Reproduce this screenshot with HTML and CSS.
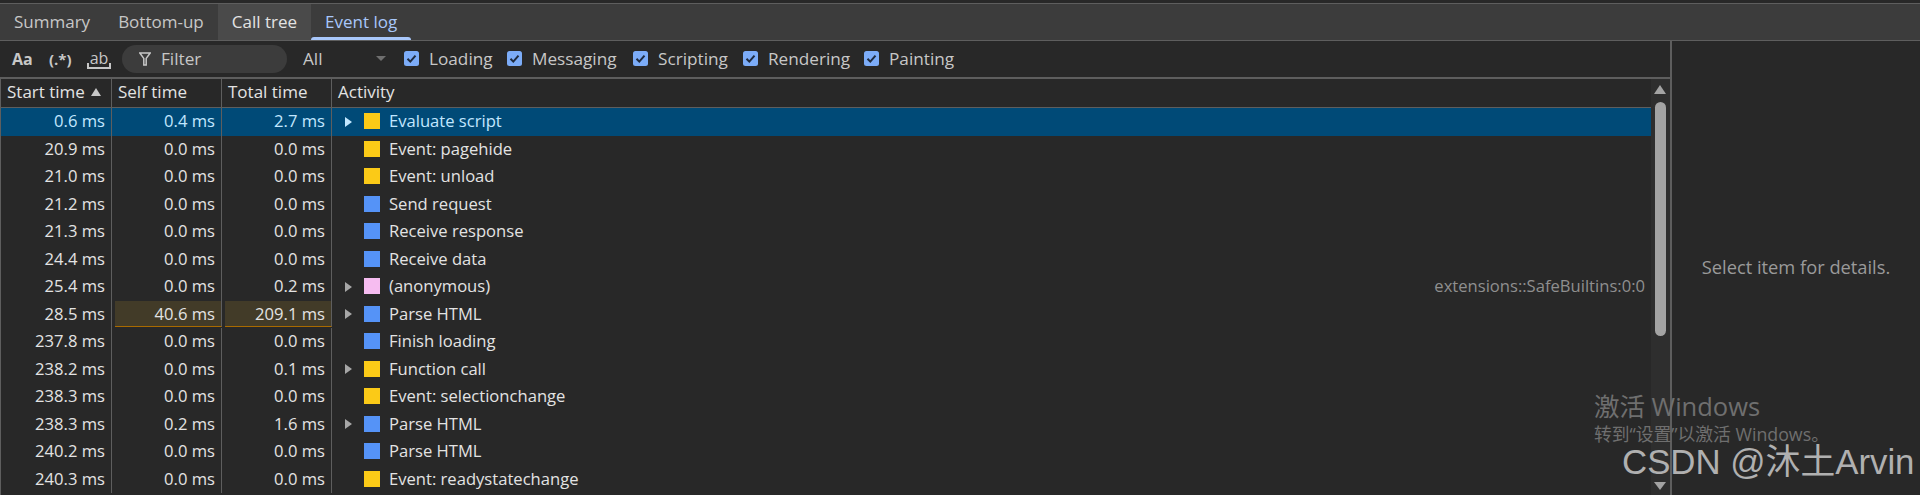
FILE: index.html
```html
<!DOCTYPE html>
<html lang="en">
<head>
<meta charset="utf-8">
<title>Event log</title>
<link rel="stylesheet" href="styles.css">
</head>
<body>
<div class="app">
  <nav class="tabs">
    <span class="tab">Summary</span>
    <span class="tab">Bottom-up</span>
    <span class="tab hover">Call tree</span>
    <span class="tab active">Event log</span>
  </nav>
  <div class="main">
    <section class="left">
      <div class="toolbar">
        <span class="tool t-aa">Aa</span>
        <span class="tool t-re">(.*)</span>
        <span class="tool t-ab">ab</span>
        <div class="filter">
          <svg class="funnel" width="12" height="14" viewBox="0 0 12 14"><path d="M0.8 1h10.4L7.2 6.4V13H4.8V6.4z" fill="none" stroke="#c7c7c7" stroke-width="1.5"/></svg>
          <span>Filter</span>
        </div>
        <div class="select"><span>All</span><i class="caret"></i></div>
        <label class="check c1"><svg class="box" width="15" height="15" viewBox="0 0 15 15"><rect width="15" height="15" rx="2.5" fill="#7cacf8"/><path d="M3.5 7.8l2.8 2.8L11.5 4.6" fill="none" stroke="#1f2b3f" stroke-width="2"/></svg>Loading</label>
        <label class="check c2"><svg class="box" width="15" height="15" viewBox="0 0 15 15"><rect width="15" height="15" rx="2.5" fill="#7cacf8"/><path d="M3.5 7.8l2.8 2.8L11.5 4.6" fill="none" stroke="#1f2b3f" stroke-width="2"/></svg>Messaging</label>
        <label class="check c3"><svg class="box" width="15" height="15" viewBox="0 0 15 15"><rect width="15" height="15" rx="2.5" fill="#7cacf8"/><path d="M3.5 7.8l2.8 2.8L11.5 4.6" fill="none" stroke="#1f2b3f" stroke-width="2"/></svg>Scripting</label>
        <label class="check c4"><svg class="box" width="15" height="15" viewBox="0 0 15 15"><rect width="15" height="15" rx="2.5" fill="#7cacf8"/><path d="M3.5 7.8l2.8 2.8L11.5 4.6" fill="none" stroke="#1f2b3f" stroke-width="2"/></svg>Rendering</label>
        <label class="check c5"><svg class="box" width="15" height="15" viewBox="0 0 15 15"><rect width="15" height="15" rx="2.5" fill="#7cacf8"/><path d="M3.5 7.8l2.8 2.8L11.5 4.6" fill="none" stroke="#1f2b3f" stroke-width="2"/></svg>Painting</label>
      </div>
      <div class="grid-wrap">
        <div class="grid">
          <div class="row head">
            <div class="cell">Start time<i class="sort"></i></div>
            <div class="cell">Self time</div>
            <div class="cell">Total time</div>
            <div class="cell activity">Activity</div>
          </div>
          <div class="row selected"><div class="cell num">0.6 ms</div><div class="cell num">0.4 ms</div><div class="cell num">2.7 ms</div><div class="cell activity"><i class="arrow"></i><i class="sq yellow"></i>Evaluate script</div></div>
          <div class="row"><div class="cell num">20.9 ms</div><div class="cell num">0.0 ms</div><div class="cell num">0.0 ms</div><div class="cell activity"><i class="noarrow"></i><i class="sq yellow"></i>Event: pagehide</div></div>
          <div class="row"><div class="cell num">21.0 ms</div><div class="cell num">0.0 ms</div><div class="cell num">0.0 ms</div><div class="cell activity"><i class="noarrow"></i><i class="sq yellow"></i>Event: unload</div></div>
          <div class="row"><div class="cell num">21.2 ms</div><div class="cell num">0.0 ms</div><div class="cell num">0.0 ms</div><div class="cell activity"><i class="noarrow"></i><i class="sq blue"></i>Send request</div></div>
          <div class="row"><div class="cell num">21.3 ms</div><div class="cell num">0.0 ms</div><div class="cell num">0.0 ms</div><div class="cell activity"><i class="noarrow"></i><i class="sq blue"></i>Receive response</div></div>
          <div class="row"><div class="cell num">24.4 ms</div><div class="cell num">0.0 ms</div><div class="cell num">0.0 ms</div><div class="cell activity"><i class="noarrow"></i><i class="sq blue"></i>Receive data</div></div>
          <div class="row"><div class="cell num">25.4 ms</div><div class="cell num">0.0 ms</div><div class="cell num">0.2 ms</div><div class="cell activity"><i class="arrow"></i><i class="sq pink"></i>(anonymous)<span class="source">extensions::SafeBuiltins:0:0</span></div></div>
          <div class="row"><div class="cell num">28.5 ms</div><div class="cell num warn">40.6 ms</div><div class="cell num warn">209.1 ms</div><div class="cell activity"><i class="arrow"></i><i class="sq blue"></i>Parse HTML</div></div>
          <div class="row"><div class="cell num">237.8 ms</div><div class="cell num">0.0 ms</div><div class="cell num">0.0 ms</div><div class="cell activity"><i class="noarrow"></i><i class="sq blue"></i>Finish loading</div></div>
          <div class="row"><div class="cell num">238.2 ms</div><div class="cell num">0.0 ms</div><div class="cell num">0.1 ms</div><div class="cell activity"><i class="arrow"></i><i class="sq yellow"></i>Function call</div></div>
          <div class="row"><div class="cell num">238.3 ms</div><div class="cell num">0.0 ms</div><div class="cell num">0.0 ms</div><div class="cell activity"><i class="noarrow"></i><i class="sq yellow"></i>Event: selectionchange</div></div>
          <div class="row"><div class="cell num">238.3 ms</div><div class="cell num">0.2 ms</div><div class="cell num">1.6 ms</div><div class="cell activity"><i class="arrow"></i><i class="sq blue"></i>Parse HTML</div></div>
          <div class="row"><div class="cell num">240.2 ms</div><div class="cell num">0.0 ms</div><div class="cell num">0.0 ms</div><div class="cell activity"><i class="noarrow"></i><i class="sq blue"></i>Parse HTML</div></div>
          <div class="row"><div class="cell num">240.3 ms</div><div class="cell num">0.0 ms</div><div class="cell num">0.0 ms</div><div class="cell activity"><i class="noarrow"></i><i class="sq yellow"></i>Event: readystatechange</div></div>
        </div>
        <div class="scrollbar">
          <i class="sb-up"></i>
          <i class="sb-thumb"></i>
          <i class="sb-down"></i>
        </div>
      </div>
    </section>
    <aside class="details">Select item for details.</aside>
  </div>
  <div class="activate">
    <div class="a1">激活 Windows</div>
    <div class="a2">转到“设置”以激活 Windows。</div>
  </div>
  <div class="csdn">CSDN @沐土Arvin</div>
</div>
</body>
</html>
```

FILE: styles.css
```css
* { box-sizing: border-box; }
html, body { margin: 0; padding: 0; background: #282828; }
.app {
  position: relative;
  width: 1920px;
  height: 495px;
  overflow: hidden;
  display: flex;
  flex-direction: column;
  padding-top: 3px;
  background: #282828;
  color: #e3e3e3;
  font-family: "Open Sans", "Noto Sans CJK SC", sans-serif;
  font-size: 16.6px;
}
.tabs {
  flex: none;
  height: 38px;
  display: flex;
  background: #3c3c3c;
  border-top: 1px solid #5e5e5e;
  border-bottom: 1px solid #5e5e5e;
  font-size: 17px;
}
.tab {
  position: relative;
  padding: 0 14px;
  line-height: 35px;
  color: #c7c7c7;
}
.tab.hover { background: #4a4a4a; color: #e3e3e3; }
.tab.active { color: #a8c7fa; }
.tab.active::after {
  content: "";
  position: absolute;
  left: 0;
  right: 0;
  bottom: 0;
  height: 3px;
  background: #a8c7fa;
  border-radius: 3px 3px 0 0;
}
.main { flex: 1; display: flex; min-height: 0; }
.left { width: 1670px; flex: none; display: flex; flex-direction: column; }
.toolbar {
  flex: none;
  height: 38px;
  display: flex;
  align-items: center;
  border-bottom: 2px solid #5e5e5e;
  padding-bottom: 1px;
  font-size: 17.2px;
}
.tool { font-weight: 700; color: #c7c7c7; font-size: 15px; }
.t-aa { margin-left: 12px; width: 37px; font-size: 16px; }
.t-re { width: 38px; }
.t-ab {
  position: relative;
  width: 24px;
  margin-right: 11px;
  font-weight: 400;
  font-size: 16px;
  line-height: 17px;
  text-align: center;
}
.t-ab::after {
  content: "";
  position: absolute;
  left: 0;
  right: 0;
  bottom: -2px;
  height: 4px;
  border: 2px solid #c7c7c7;
  border-top: 0;
}
.filter {
  width: 165px;
  height: 28px;
  border-radius: 14px;
  background: #3c3c3c;
  display: flex;
  align-items: center;
  gap: 10px;
  padding-left: 17px;
  color: #c7c7c7;
}
.select {
  width: 99px;
  margin-left: 16px;
  margin-right: 2px;
  padding-right: 16px;
  display: flex;
  align-items: center;
  justify-content: space-between;
  color: #c7c7c7;
}
.caret { width: 0; height: 0; border-left: 5px solid transparent; border-right: 5px solid transparent; border-top: 5px solid #6f6f6f; }
.check { display: flex; align-items: center; gap: 10px; color: #c7c7c7; }
.c1 { width: 103px; }
.c2 { width: 126px; }
.c3 { width: 110px; }
.c4 { width: 121px; }
.box { flex: none; }
.grid-wrap { flex: 1; display: flex; min-height: 0; border-left: 1px solid #5e5e5e; }
.grid { flex: 1; min-width: 0; background: #282828; }
.row {
  display: grid;
  grid-template-columns: 111px 110px 110px 1fr;
  height: 27.5px;
  line-height: 26px;
}
.head { height: 29px; line-height: 25px; border-bottom: 1px solid #5e5e5e; font-size: 17px; }
.cell { padding: 0 6px; border-right: 1px solid #5e5e5e; white-space: nowrap; overflow: hidden; position: relative; }
.cell.activity { border-right: 0; display: flex; align-items: center; height: 26.5px; padding-left: 6px; }
.head .cell.activity { height: 25px; }
.row:not(.head) .activity { padding-left: 13px; }
.num { text-align: right; }
.selected { background: #004a77; color: #c2e7ff; }
.warn {
  background: #423b28;
  margin-left: 3px;
  height: 26px;
  border-bottom: 1px solid #a86a00;
}
.sort {
  display: inline-block;
  margin-left: 6px;
  width: 0;
  height: 0;
  vertical-align: 2px;
  border-left: 5.5px solid transparent;
  border-right: 5.5px solid transparent;
  border-bottom: 8px solid #c7c7c7;
}
.arrow, .noarrow { flex: none; width: 19px; height: 11px; }
.arrow::before {
  content: "";
  display: block;
  width: 0;
  height: 0;
  margin-top: 1px;
  border-top: 5px solid transparent;
  border-bottom: 5px solid transparent;
  border-left: 7px solid #a6a6a6;
}
.selected .arrow::before { border-left-color: #c2e7ff; }
.sq { flex: none; width: 16px; height: 16px; margin-right: 9px; }
.yellow { background: #fbca17; }
.blue { background: #5593f7; }
.pink { background: #f6bcf0; }
.source { margin-left: auto; color: #8f8f8f; }
.scrollbar {
  flex: none;
  width: 19px;
  position: relative;
  background: #2e2e2e;
}
.sb-up, .sb-down {
  position: absolute;
  left: 3px;
  width: 0;
  height: 0;
  border-left: 6.5px solid transparent;
  border-right: 6.5px solid transparent;
}
.sb-up { top: 6px; border-bottom: 9px solid #a3a3a3; }
.sb-down { top: 403px; border-top: 8px solid #a3a3a3; }
.sb-thumb {
  position: absolute;
  left: 4px;
  top: 23px;
  width: 11px;
  height: 234px;
  border-radius: 6px;
  background: #a3a3a3;
}
.details {
  flex: 1;
  border-left: 2px solid #5e5e5e;
  display: flex;
  align-items: center;
  justify-content: center;
  color: #9a9a9a;
  font-size: 18.3px;
  padding-bottom: 3px;
}
.activate {
  position: absolute;
  left: 1594px;
  top: 390px;
  color: #6f6f6f;
  pointer-events: none;
  font-family: "Open Sans", "Noto Sans CJK SC", sans-serif;
}
.a1 { font-size: 25.5px; line-height: 32px; }
.a2 { font-size: 17.8px; line-height: 24px; }
.csdn {
  position: absolute;
  left: 1622px;
  top: 442px;
  font-family: "Liberation Sans", "Noto Sans CJK SC", sans-serif;
  font-size: 34.8px;
  line-height: 40px;
  color: #b0b0b0;
  white-space: nowrap;
}
```
